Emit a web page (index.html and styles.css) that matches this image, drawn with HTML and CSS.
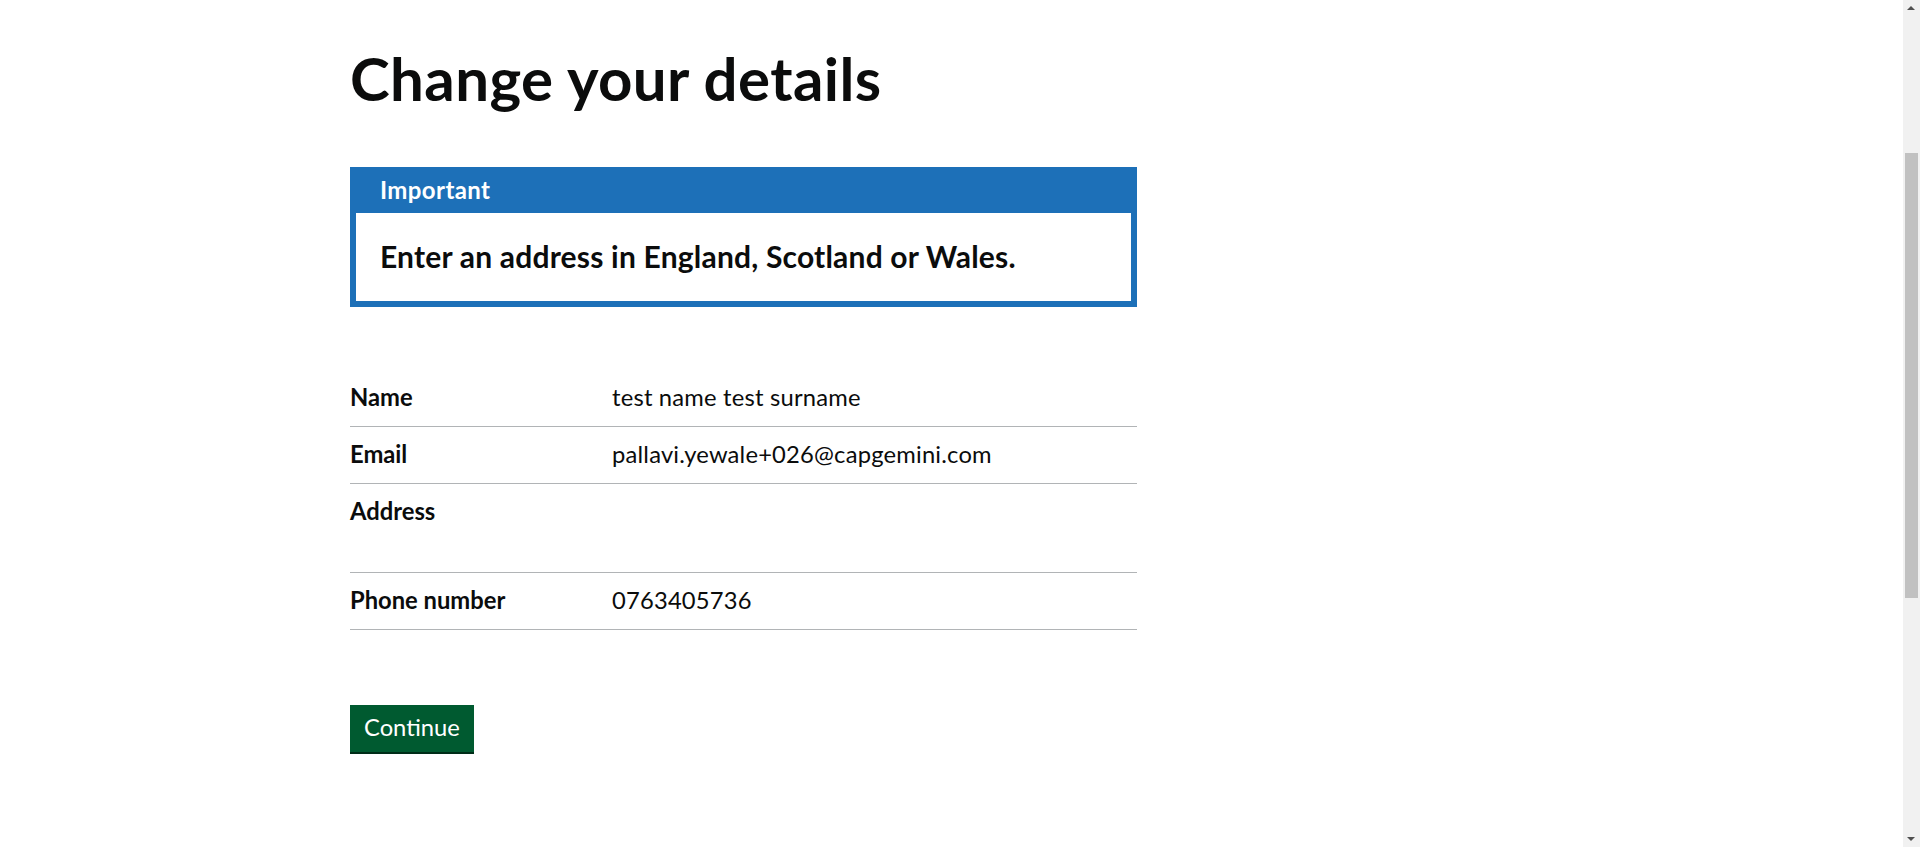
FILE: index.html
```html
<!DOCTYPE html>
<html lang="en">
<head>
<meta charset="utf-8">
<title>Change your details</title>
<link rel="stylesheet" href="styles.css">
</head>
<body>
<div class="width-container">
  <main class="main">
    <div class="two-thirds">
      <h1 class="heading-xl">Change your details</h1>

      <div class="notice-panel">
        <div class="notice-title">Important</div>
        <div class="notice-body">Enter an address in England, Scotland or Wales.</div>
      </div>

      <dl class="summary-list">
        <div class="summary-row">
          <dt class="summary-key">Name</dt>
          <dd class="summary-value">test name test surname</dd>
        </div>
        <div class="summary-row">
          <dt class="summary-key">Email</dt>
          <dd class="summary-value">pallavi.yewale+026@capgemini.com</dd>
        </div>
        <div class="summary-row">
          <dt class="summary-key">Address</dt>
          <dd class="summary-value"><br><br></dd>
        </div>
        <div class="summary-row">
          <dt class="summary-key">Phone number</dt>
          <dd class="summary-value">0763405736</dd>
        </div>
      </dl>

      <button class="button" type="button">Continue</button>
    </div>
  </main>
</div>

<div class="scrollbar" aria-hidden="true">
  <span class="scroll-arrow scroll-arrow-up"></span>
  <span class="scroll-thumb"></span>
  <span class="scroll-arrow scroll-arrow-down"></span>
</div>
</body>
</html>
```
FILE: styles.css
```css
html, body {
  margin: 0;
  padding: 0;
  background: #ffffff;
}

body {
  font-family: Lato, "Liberation Sans", Arial, sans-serif;
  color: #0b0c0c;
  padding-right: 17px;
  -webkit-font-smoothing: antialiased;
}

.width-container {
  max-width: 1203px;
  margin: 0 auto;
}

.main {
  padding-top: 47px;
  padding-bottom: 40px;
}

.two-thirds {
  width: 787px;
}

.heading-xl {
  margin: 0 0 58px 0;
  font-size: 60px;
  line-height: 62px;
  font-weight: 700;
  letter-spacing: 0.4px;
}

.notice-panel {
  border: 6px solid #1d70b8;
  margin-bottom: 63px;
}

.notice-title {
  background: #1d70b8;
  color: #ffffff;
  font-size: 24px;
  line-height: 31px;
  font-weight: 700;
  letter-spacing: 0.4px;
  padding: 1px 24px 8px 24px;
}

.notice-body {
  font-size: 30px;
  line-height: 38px;
  font-weight: 700;
  letter-spacing: 0.2px;
  padding: 24px 24px 26px 24px;
}

.summary-list {
  margin: 0 0 75px 0;
  padding: 0;
}

.summary-row {
  display: grid;
  grid-template-columns: 262px 1fr;
  border-bottom: 1px solid #b1b4b6;
}

.summary-key,
.summary-value {
  margin: 0;
  padding: 11px 0 13px 0;
  font-size: 23.75px;
  line-height: 32px;
}

.summary-key {
  font-weight: 700;
}

.summary-value {
  font-weight: 400;
  letter-spacing: 0.2px;
}

.button {
  display: inline-block;
  margin: 0;
  border: 0;
  border-radius: 0;
  background: #005a30;
  color: #ffffff;
  font-family: Lato, "Liberation Sans", Arial, sans-serif;
  font-size: 23.75px;
  line-height: 28px;
  font-weight: 400;
  padding: 8px 14px 11px 14px;
  box-shadow: 0 2px 0 #002d18;
  cursor: pointer;
}

/* browser scrollbar (drawn, since the page is shown scrolled) */
.scrollbar {
  position: fixed;
  top: 0;
  right: 0;
  width: 17px;
  height: 100%;
  background: #f1f1f1;
}

.scroll-thumb {
  position: absolute;
  left: 2px;
  right: 2px;
  top: 153px;
  height: 445px;
  background: #c1c1c1;
}

.scroll-arrow {
  position: absolute;
  left: 4px;
  width: 0;
  height: 0;
  border-left: 4.5px solid transparent;
  border-right: 4.5px solid transparent;
}

.scroll-arrow-up {
  top: 6px;
  border-bottom: 4px solid #505050;
}

.scroll-arrow-down {
  bottom: 6px;
  border-top: 4px solid #505050;
}
```
